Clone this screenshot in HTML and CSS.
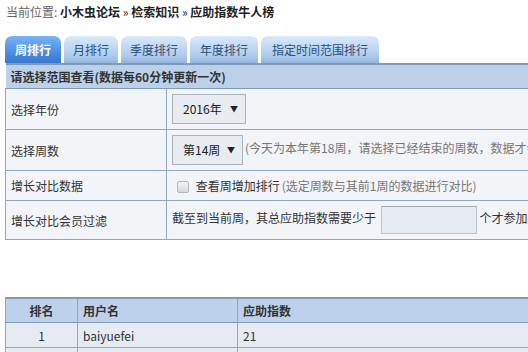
FILE: index.html
```html
<!DOCTYPE html>
<html lang="zh-CN">
<head>
    <meta charset="UTF-8">
    <meta name="viewport" content="width=device-width, initial-scale=1.0">
    <title>应助指数牛人榜</title>
    <link rel="stylesheet" href="styles.css">
</head>
<body>
    <div class="crumb">
        <span class="crumb-label">当前位置:</span>
        <b>小木虫论坛</b> » <b>检索知识</b> » <b>应助指数牛人榜</b>
    </div>

    <ul class="tabs">
        <li class="tab active">周排行</li>
        <li class="tab">月排行</li>
        <li class="tab">季度排行</li>
        <li class="tab">年度排行</li>
        <li class="tab">指定时间范围排行</li>
    </ul>

    <table class="filter">
        <tr class="head">
            <th colspan="2">请选择范围查看(数据每60分钟更新一次)</th>
        </tr>
        <tr class="tall">
            <td class="label">选择年份</td>
            <td><span class="select year">2016年 <i>▼</i></span></td>
        </tr>
        <tr class="tall">
            <td class="label">选择周数</td>
            <td><span class="select week">第14周 <i>▼</i></span><span class="note">(今天为本年第18周，请选择已经结束的周数，数据才会准确)</span></td>
        </tr>
        <tr class="short">
            <td class="label">增长对比数据</td>
            <td><span class="check"></span> 查看周增加排行<span class="note">(选定周数与其前1周的数据进行对比)</span></td>
        </tr>
        <tr class="mid">
            <td class="label">增长对比会员过滤</td>
            <td>截至到当前周，其总应助指数需要少于 <span class="input"></span> 个才参加排行</td>
        </tr>
    </table>

    <table class="rank">
        <tr>
            <th class="num">排名</th>
            <th class="user">用户名</th>
            <th>应助指数</th>
        </tr>
        <tr>
            <td class="num">1</td>
            <td class="user">baiyuefei</td>
            <td>21</td>
        </tr>
        <tr>
            <td class="num">2</td>
            <td class="user">gaoxiang</td>
            <td>18</td>
        </tr>
    </table>
</body>
</html>
```

FILE: styles.css
```css
body {
    margin: 0;
    padding: 0 0 0 5px;
    width: 760px;
    font-family: "Noto Sans CJK SC", "Microsoft YaHei", sans-serif;
    font-size: 12px;
    color: #333;
    background: #fff;
}
html {
    overflow: hidden;
}
.crumb {
    height: 26px;
    line-height: 24px;
    padding-left: 1px;
    font-size: 12px;
    color: #222;
}
.crumb-label {
    color: #666;
}
.crumb b {
    font-weight: bold;
}
.tabs {
    list-style: none;
    margin: 10px 0 0 0;
    padding: 0;
    display: flex;
    gap: 3px;
    height: 27px;
}
.tab {
    padding: 0 9px;
    height: 27px;
    line-height: 28px;
    border-radius: 7px 7px 0 0;
    background: linear-gradient(#d9e9fa, #b0cdee 70%, #94b6dc);
    color: #2b4f80;
    font-size: 12px;
}
.tab:nth-child(4) {
    padding: 0 10px;
}
.tab:last-child {
    padding: 0 11px;
}
.tab.active {
    background: linear-gradient(#79b3f5, #4a8ee6 60%, #3a78cc);
    color: #fff;
    font-weight: bold;
    padding: 0 10px;
}
table {
    border-collapse: collapse;
    width: 740px;
}
.filter {
    border-top: 2px solid #7d9ab8;
}
.filter th {
    text-align: left;
    height: 23px;
    padding: 0 5px;
    background: #bdd0ea;
    font-weight: bold;
    color: #333;
    border-bottom: 1px solid #7d9ab8;
}
.filter td {
    border-bottom: 1px solid #8fa8c2;
    background: #f2f4f8;
    padding: 0 5px;
    white-space: nowrap;
}
.filter td.label {
    width: 150px;
    border-left: 1px solid #8fa8c2;
    border-right: 1px solid #8fa8c2;
}
.filter tr.tall td {
    height: 40px;
}
.filter tr.short td {
    height: 29px;
}
.filter tr.mid td {
    height: 38px;
}
.select {
    display: inline-block;
    vertical-align: middle;
    height: 28px;
    line-height: 28px;
    border: 1px solid #a9b3c0;
    background: #e8ebf0;
    padding: 0 0 0 10px;
    color: #222;
    font-size: 12px;
}
.select.year {
    width: 62px;
}
.select.week {
    width: 59px;
}
.select i {
    font-style: normal;
    font-size: 8px;
    float: right;
    margin-right: 7px;
}
.note {
    color: #777;
    margin-left: 2px;
}
.check {
    display: inline-block;
    vertical-align: -2px;
    width: 10px;
    height: 10px;
    margin: 0 4px 0 5px;
    border: 1px solid #b2b8c0;
    border-radius: 2px;
    background: linear-gradient(#f4f4f4, #d6d9dd);
}
.input {
    display: inline-block;
    vertical-align: middle;
    width: 94px;
    height: 26px;
    margin: 0 0 0 2px;
    border: 1px solid #b9c3cf;
    border-top-color: #9aa6b4;
    background: #e6ebf2;
}
.rank {
    margin-top: 57px;
    border-top: 2px solid #7d9ab8;
}
.rank th {
    height: 23px;
    background: #bdd1ec;
    font-weight: bold;
    text-align: left;
    padding: 0 5px;
    border-left: 1px solid #8fa8c2;
    border-bottom: 1px solid #7d9ab8;
}
.rank td {
    height: 24px;
    background: #e6ebf2;
    padding: 0 5px;
    border-left: 1px solid #8fa8c2;
    border-bottom: 1px solid #8fa8c2;
}
.rank .num {
    width: 61px;
    text-align: center;
}
.rank .user {
    width: 149px;
}
```
